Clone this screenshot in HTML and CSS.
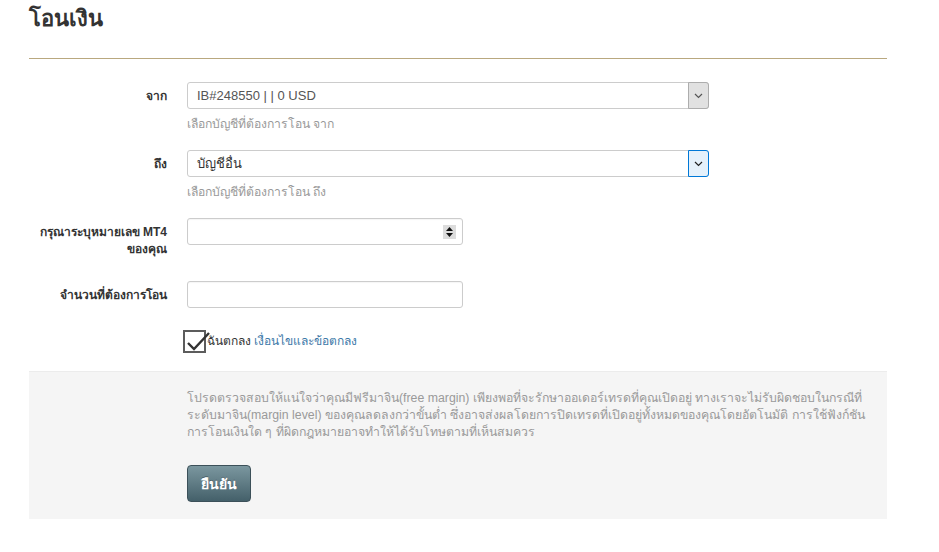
FILE: index.html
```html
<!DOCTYPE html>
<html lang="th">
<head>
<meta charset="utf-8">
<title>โอนเงิน</title>
<link rel="stylesheet" href="styles.css">
</head>
<body>
<div class="page">
  <h1 class="title">โอนเงิน</h1>
  <hr class="rule">
  <form class="form">
    <div class="row">
      <label class="lbl">จาก</label>
      <div class="field">
        <div class="select">
          <span class="select-value">IB#248550 | | 0 USD</span>
          <span class="select-arrow"><svg width="9" height="6" viewBox="0 0 9 6"><path d="M1 1 L4.5 4.5 L8 1" fill="none" stroke="#555" stroke-width="1.2"/></svg></span>
        </div>
        <p class="help">เลือกบัญชีที่ต้องการโอน จาก</p>
      </div>
    </div>
    <div class="row">
      <label class="lbl">ถึง</label>
      <div class="field">
        <div class="select select-focus">
          <span class="select-value dark">บัญชีอื่น</span>
          <span class="select-arrow"><svg width="9" height="6" viewBox="0 0 9 6"><path d="M1 1 L4.5 4.5 L8 1" fill="none" stroke="#222" stroke-width="1.2"/></svg></span>
        </div>
        <p class="help">เลือกบัญชีที่ต้องการโอน ถึง</p>
      </div>
    </div>
    <div class="row row-tall">
      <label class="lbl">กรุณาระบุหมายเลข MT4<br>ของคุณ</label>
      <div class="field">
        <div class="input">
          <span class="spin"><svg width="13" height="14" viewBox="0 0 13 14"><rect width="13" height="14" fill="#dcdcdc"/><path d="M6.5 2 L10 6 L3 6 Z" fill="#111"/><path d="M6.5 12 L10 8 L3 8 Z" fill="#111"/></svg></span>
        </div>
      </div>
    </div>
    <div class="row">
      <label class="lbl">จำนวนที่ต้องการโอน</label>
      <div class="field">
        <div class="input"></div>
      </div>
    </div>
    <div class="agree">
      <span class="check"><svg width="28" height="24" viewBox="0 0 28 24"><path d="M3 13 L9 19 L24 3" fill="none" stroke="#333" stroke-width="2.4"/></svg></span>
      <span class="agree-text">ฉันตกลง <a class="link" href="#">เงื่อนไขและข้อตกลง</a></span>
    </div>
  </form>
  <div class="panel">
    <p class="note">โปรดตรวจสอบให้แน่ใจว่าคุณมีฟรีมาจิน(free margin) เพียงพอที่จะรักษาออเดอร์เทรดที่คุณเปิดอยู่ ทางเราจะไม่รับผิดชอบในกรณีที่<br>ระดับมาจิน(margin level) ของคุณลดลงกว่าขั้นต่ำ ซึ่งอาจส่งผลโดยการปิดเทรดที่เปิดอยู่ทั้งหมดของคุณโดยอัตโนมัติ การใช้ฟังก์ชัน<br>การโอนเงินใด ๆ ที่ผิดกฎหมายอาจทำให้ได้รับโทษตามที่เห็นสมควร</p>
    <button class="btn" type="button">ยืนยัน</button>
  </div>
</div>
</body>
</html>
```

FILE: styles.css
```css
* { box-sizing: border-box; }
html, body { margin: 0; padding: 0; background: #fff; }
body {
  font-family: "Liberation Sans", Arial, "Noto Sans", sans-serif;
  font-size: 12px;
  color: #333;
}
.page {
  width: 858px;
  margin-left: 29px;
  padding-top: 4px;
}
.title {
  margin: 0;
  font-size: 22px;
  line-height: 30px;
  font-weight: bold;
  color: #333;
}
.rule {
  margin: 24px 0 0;
  border: 0;
  height: 1px;
  background: #b9a87f;
}
.form { padding-top: 23px; }
.row {
  display: grid;
  grid-template-columns: 138px 1fr;
  column-gap: 20px;
  margin-bottom: 17px;
}
.row-tall { margin-bottom: 23px; }
.lbl {
  text-align: right;
  font-weight: bold;
  padding-top: 6px;
  line-height: 17px;
  color: #333;
}
.field { min-width: 0; }
.select {
  width: 522px;
  height: 27px;
  border: 1px solid #ccc;
  border-radius: 3px;
  display: flex;
  align-items: stretch;
  background: #fff;
}
.select-value {
  flex: 1;
  padding-left: 9px;
  font-size: 13px;
  line-height: 25px;
  color: #555;
}
.select-value.dark { color: #333; }
.select-arrow {
  width: 21px;
  margin: -1px -1px -1px 0;
  border: 1px solid #adadad;
  border-radius: 0 3px 3px 0;
  background: #e1e1e1;
  display: flex;
  align-items: center;
  justify-content: center;
}
.select-focus .select-arrow {
  background: #e5f1fb;
  border-color: #0078d7;
}
.help {
  margin: 7px 0 0;
  font-size: 12.2px;
  line-height: 17px;
  color: #999;
}
.input {
  width: 276px;
  height: 27px;
  border: 1px solid #ccc;
  border-radius: 3px;
  background: #fff;
  box-shadow: inset 0 1px 1px rgba(0,0,0,0.04);
  display: flex;
  align-items: center;
  justify-content: flex-end;
  padding-right: 6px;
}
.spin { display: flex; }
.agree {
  display: flex;
  align-items: center;
  margin-top: 22px;
  padding-left: 154px;
  height: 23px;
}
.check {
  width: 23px;
  height: 23px;
  border: 2px solid #5c5c5c;
  position: relative;
  flex: none;
}
.check svg {
  position: absolute;
  left: 0;
  top: -2px;
}
.agree-text {
  margin-left: 1px;
  line-height: 17px;
  color: #333;
}
.link { color: #3d78a8; text-decoration: none; }
.panel {
  margin-top: 18px;
  background: #f5f5f5;
  border-top: 1px solid #ececec;
  padding: 18px 20px 17px 158px;
}
.note {
  margin: 0;
  font-size: 12.3px;
  line-height: 17px;
  color: #9a9a9a;
  white-space: nowrap;
}
.btn {
  display: block;
  margin-top: 24px;
  width: 64px;
  height: 37px;
  border: 1px solid #3c5059;
  border-radius: 4px;
  background: linear-gradient(#7b979f, #44606a);
  color: #fff;
  font-family: inherit;
  font-size: 14px;
  font-weight: bold;
  text-shadow: 0 -1px 0 rgba(0,0,0,0.3);
  padding: 0;
}
```
